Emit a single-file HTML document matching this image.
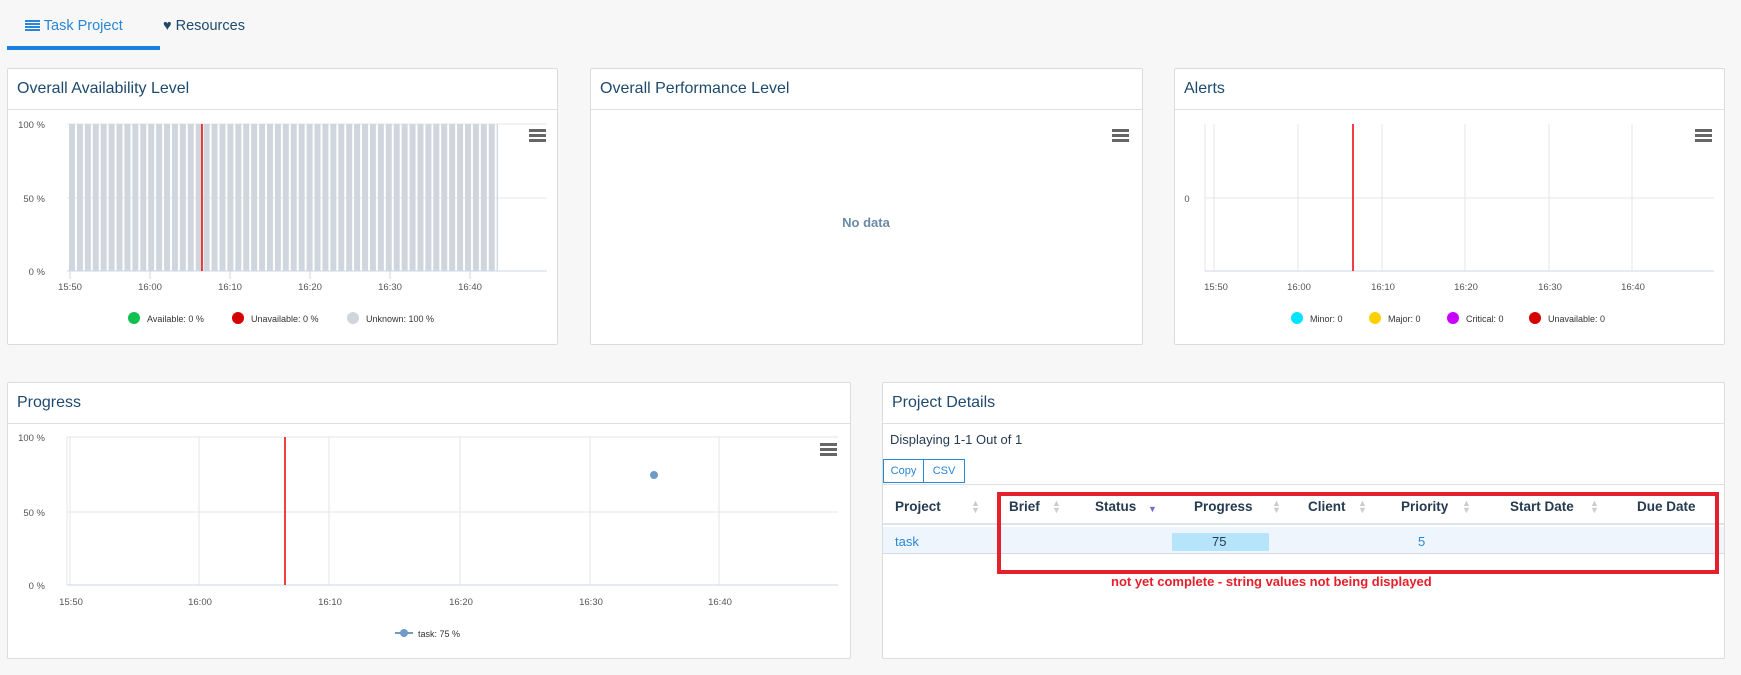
<!DOCTYPE html>
<html><head><meta charset="utf-8"><style>
body{margin:0;width:1741px;height:675px;background:#f7f7f7;font-family:"Liberation Sans",sans-serif;position:relative;overflow:hidden}
.card{position:absolute;background:#fff;border:1px solid #dcdcdc;border-radius:2px;box-sizing:border-box}
.card .h{height:40px;border-bottom:1px solid #e0e0e0;padding-left:9px;line-height:40px;font-size:16px;color:#1e4a6e}
.tab{position:absolute;top:18px;font-size:14.5px}
svg{position:absolute;left:0;top:0}
.t{position:absolute;font-size:13.5px;font-weight:bold;color:#253b50}
.sa{position:absolute;font-size:9px;color:#ccc;line-height:7px}
</style></head><body>
<div class="tab" style="left:25px;color:#2a86d6"><span style="display:inline-block;width:15px;height:11px;background:repeating-linear-gradient(#2a86d6 0 2px,#fff 2px 3px);vertical-align:-1px"></span> Task Project</div>
<div style="position:absolute;left:7px;top:46px;width:153px;height:4px;background:#1a7fe0"></div>
<div class="tab" style="left:163px;color:#1e4a6e"><span style="color:#1e4a6e">♥</span> Resources</div>

<div class="card" style="left:7px;top:68px;width:551px;height:277px"><div class="h">Overall Availability Level</div></div>
<div class="card" style="left:590px;top:68px;width:553px;height:277px"><div class="h">Overall Performance Level</div></div>
<div class="card" style="left:1174px;top:68px;width:551px;height:277px"><div class="h">Alerts</div></div>
<div class="card" style="left:7px;top:382px;width:844px;height:277px"><div class="h">Progress</div></div>
<div class="card" style="left:882px;top:382px;width:843px;height:277px"><div class="h">Project Details</div></div>

<div style="position:absolute;left:890px;top:432px;font-size:13px;color:#253b50">Displaying 1-1 Out of 1</div>
<div style="position:absolute;left:883px;top:459px;width:41px;height:24px;border:1px solid #2a86d6;box-sizing:border-box;font-size:11px;color:#2a86d6;line-height:22px;text-align:center">Copy</div>
<div style="position:absolute;left:923px;top:459px;width:42px;height:24px;border:1px solid #2a86d6;box-sizing:border-box;font-size:11px;color:#2a86d6;line-height:22px;text-align:center">CSV</div>
<div style="position:absolute;left:883px;top:484px;width:841px;height:1px;background:#e0e0e0"></div>
<div style="position:absolute;left:883px;top:523px;width:841px;height:2px;background:#dde3ea"></div>
<div style="position:absolute;left:883px;top:527px;width:841px;height:26px;background:#eef5fc;border-bottom:1px solid #d5dbe2"></div>
<div style="position:absolute;left:1172px;top:533px;width:97px;height:18px;background:#b6e4fb"></div>
<div class="t" style="left:895px;top:499px">Project</div>
<div class="t" style="left:1009px;top:499px">Brief</div>
<div class="t" style="left:1095px;top:499px">Status</div>
<div class="t" style="left:1194px;top:499px">Progress</div>
<div class="t" style="left:1308px;top:499px">Client</div>
<div class="t" style="left:1401px;top:499px">Priority</div>
<div class="t" style="left:1510px;top:499px">Start Date</div>
<div class="t" style="left:1637px;top:499px">Due Date</div>
<div class="sa" style="left:971px;top:500px">▲<br>▼</div>
<div class="sa" style="left:1052px;top:500px">▲<br>▼</div>
<div class="sa" style="left:1148px;top:506px;color:#6c6ce0">▼</div>
<div class="sa" style="left:1272px;top:500px">▲<br>▼</div>
<div class="sa" style="left:1358px;top:500px">▲<br>▼</div>
<div class="sa" style="left:1462px;top:500px">▲<br>▼</div>
<div class="sa" style="left:1590px;top:500px">▲<br>▼</div>
<div style="position:absolute;left:895px;top:534px;font-size:13px;color:#2a86d6">task</div>
<div style="position:absolute;left:1212px;top:534px;font-size:13px;color:#253b50">75</div>
<div style="position:absolute;left:1418px;top:534px;font-size:13px;color:#2a86d6">5</div>
<div style="position:absolute;left:997px;top:492px;width:722px;height:82px;border:4px solid #e3202b;box-sizing:border-box"></div>
<div style="position:absolute;left:1111px;top:574px;font-size:13px;font-weight:bold;color:#e3202b">not yet complete - string values not being displayed</div>

<svg width="1741" height="675" font-family="Liberation Sans,sans-serif" font-size="9.5" fill="#555">
<defs><pattern id="b" x="69" y="0" width="7.92" height="10" patternUnits="userSpaceOnUse"><rect width="6" height="10" fill="#cfd6dd"/></pattern></defs>
<line x1="67" y1="124" x2="547" y2="124" stroke="#e6e6e6"/><line x1="67" y1="198" x2="547" y2="198" stroke="#e6e6e6"/>
<rect x="69" y="124" width="429" height="147" fill="url(#b)"/>
<line x1="67" y1="271" x2="547" y2="271" stroke="#ccd6eb"/>
<line x1="202" y1="124" x2="202" y2="271" stroke="#e00" stroke-width="1.5"/>
<g stroke="#ccd6eb"><line x1="70" y1="271" x2="70" y2="279"/><line x1="150" y1="271" x2="150" y2="279"/><line x1="230" y1="271" x2="230" y2="279"/><line x1="310" y1="271" x2="310" y2="279"/><line x1="390" y1="271" x2="390" y2="279"/><line x1="470" y1="271" x2="470" y2="279"/></g>
<g text-anchor="middle"><text x="70" y="290">15:50</text><text x="150" y="290">16:00</text><text x="230" y="290">16:10</text><text x="310" y="290">16:20</text><text x="390" y="290">16:30</text><text x="470" y="290">16:40</text></g>
<g text-anchor="end"><text x="45" y="128">100 %</text><text x="45" y="202">50 %</text><text x="45" y="275">0 %</text></g>
<g font-size="9" fill="#333"><circle cx="134" cy="318" r="6" fill="#11c050"/><text x="147" y="322">Available: 0 %</text><circle cx="238" cy="318" r="6" fill="#d40000"/><text x="251" y="322">Unavailable: 0 %</text><circle cx="353" cy="318" r="6" fill="#cfd6dd"/><text x="366" y="322">Unknown: 100 %</text></g>
<g fill="#666"><rect x="529" y="129" width="17" height="3"/><rect x="529" y="134" width="17" height="3"/><rect x="529" y="139" width="17" height="3"/></g>
<text x="866" y="227" text-anchor="middle" font-size="13" font-weight="bold" fill="#6b8aa8">No data</text>
<g fill="#666"><rect x="1112" y="129" width="17" height="3"/><rect x="1112" y="134" width="17" height="3"/><rect x="1112" y="139" width="17" height="3"/></g>
<g stroke="#e6e6e6"><line x1="1214" y1="124" x2="1214" y2="271"/><line x1="1298" y1="124" x2="1298" y2="271"/><line x1="1382" y1="124" x2="1382" y2="271"/><line x1="1465" y1="124" x2="1465" y2="271"/><line x1="1549" y1="124" x2="1549" y2="271"/><line x1="1632" y1="124" x2="1632" y2="271"/><line x1="1205" y1="198" x2="1714" y2="198"/><line x1="1205" y1="124" x2="1205" y2="271"/></g>
<line x1="1205" y1="271" x2="1714" y2="271" stroke="#ccd6eb"/>
<line x1="1353" y1="124" x2="1353" y2="271" stroke="#e00" stroke-width="1.5"/>
<g text-anchor="middle"><text x="1216" y="290">15:50</text><text x="1299" y="290">16:00</text><text x="1383" y="290">16:10</text><text x="1466" y="290">16:20</text><text x="1550" y="290">16:30</text><text x="1633" y="290">16:40</text></g>
<text x="1187" y="202" text-anchor="middle">0</text>
<g font-size="9" fill="#333"><circle cx="1297" cy="318" r="6" fill="#00e5ff"/><text x="1310" y="322">Minor: 0</text><circle cx="1375" cy="318" r="6" fill="#ffd000"/><text x="1388" y="322">Major: 0</text><circle cx="1453" cy="318" r="6" fill="#c800ff"/><text x="1466" y="322">Critical: 0</text><circle cx="1535" cy="318" r="6" fill="#d40000"/><text x="1548" y="322">Unavailable: 0</text></g>
<g fill="#666"><rect x="1695" y="129" width="17" height="3"/><rect x="1695" y="134" width="17" height="3"/><rect x="1695" y="139" width="17" height="3"/></g>
<g stroke="#e6e6e6"><line x1="70" y1="437" x2="70" y2="585"/><line x1="199" y1="437" x2="199" y2="585"/><line x1="329" y1="437" x2="329" y2="585"/><line x1="460" y1="437" x2="460" y2="585"/><line x1="590" y1="437" x2="590" y2="585"/><line x1="719" y1="437" x2="719" y2="585"/><line x1="67" y1="437" x2="838" y2="437"/><line x1="67" y1="512" x2="838" y2="512"/><line x1="67" y1="437" x2="67" y2="585"/></g>
<line x1="67" y1="585" x2="838" y2="585" stroke="#ccd6eb"/>
<line x1="285" y1="437" x2="285" y2="585" stroke="#e00" stroke-width="1.5"/>
<circle cx="654" cy="475" r="4" fill="#6f9bc8"/>
<g text-anchor="middle"><text x="71" y="605">15:50</text><text x="200" y="605">16:00</text><text x="330" y="605">16:10</text><text x="461" y="605">16:20</text><text x="591" y="605">16:30</text><text x="720" y="605">16:40</text></g>
<g text-anchor="end"><text x="45" y="441">100 %</text><text x="45" y="516">50 %</text><text x="45" y="589">0 %</text></g>
<line x1="395" y1="633" x2="413" y2="633" stroke="#6f9bc8" stroke-width="2"/><circle cx="404" cy="633" r="4" fill="#6f9bc8"/>
<text x="418" y="637" font-size="9" fill="#333">task: 75 %</text>
<g fill="#666"><rect x="820" y="443" width="17" height="3"/><rect x="820" y="448" width="17" height="3"/><rect x="820" y="453" width="17" height="3"/></g>
</svg>
</body></html>
